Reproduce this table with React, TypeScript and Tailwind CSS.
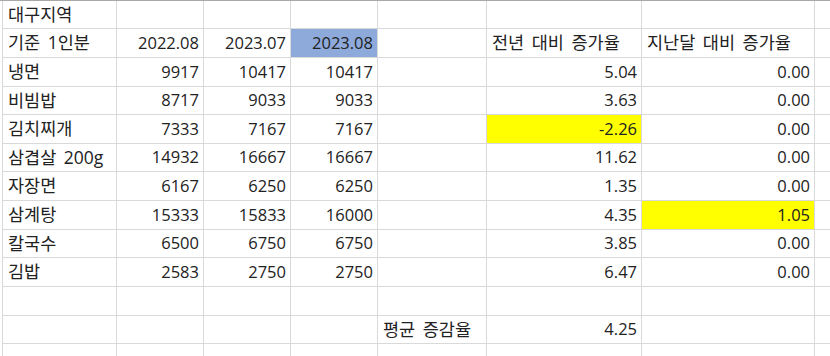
const ROWS: { name: string; a: string; b: string; c: string; yoy: string; mom: string; yoyHi?: boolean; momHi?: boolean }[] = [
  { name: '냉면', a: '9917', b: '10417', c: '10417', yoy: '5.04', mom: '0.00' },
  { name: '비빔밥', a: '8717', b: '9033', c: '9033', yoy: '3.63', mom: '0.00' },
  { name: '김치찌개', a: '7333', b: '7167', c: '7167', yoy: '-2.26', mom: '0.00', yoyHi: true },
  { name: '삼겹살 200g', a: '14932', b: '16667', c: '16667', yoy: '11.62', mom: '0.00' },
  { name: '자장면', a: '6167', b: '6250', c: '6250', yoy: '1.35', mom: '0.00' },
  { name: '삼계탕', a: '15333', b: '15833', c: '16000', yoy: '4.35', mom: '1.05', momHi: true },
  { name: '칼국수', a: '6500', b: '6750', c: '6750', yoy: '3.85', mom: '0.00' },
  { name: '김밥', a: '2583', b: '2750', c: '2750', yoy: '6.47', mom: '0.00' },
]

function Cell({ children, right, className }: { children?: React.ReactNode; right?: boolean; className?: string }) {
  return (
    <div
      className={`flex items-center whitespace-nowrap overflow-visible leading-none ${
        right ? 'justify-end pr-[4px] text-[16.5px]' : 'justify-start pl-[5px] text-[17.5px] [word-spacing:3px]'
      } ${className ?? 'bg-white'}`}
    >
      {children}
    </div>
  )
}

function EmptyRow({ cols = 8 }: { cols?: number }) {
  return (
    <>
      {Array.from({ length: cols }).map((_, i) => (
        <Cell key={i} />
      ))}
    </>
  )
}

export default function App() {
  return (
    <div
      className="w-[830px] h-[356px] overflow-hidden bg-white border-t border-[#a8a8a8] text-[#222]"
      style={{ fontFamily: "'Open Sans', 'Noto Sans CJK KR', sans-serif" }}
    >
      <div className="ml-[2px] pl-px grid gap-px bg-[#d9d9d9] grid-cols-[113px_86px_86px_86px_108px_154px_172px_15px] grid-rows-[27px_28px_28px_27px_28px_27px_28px_28px_27px_28px_28px_27px_12px]">
        {/* title */}
        <Cell>대구지역</Cell>
        <EmptyRow cols={7} />

        {/* header */}
        <Cell>기준 1인분</Cell>
        <Cell right>2022.08</Cell>
        <Cell right>2023.07</Cell>
        <Cell right className="bg-[#8eaadb]">2023.08</Cell>
        <Cell />
        <Cell>전년 대비 증가율</Cell>
        <Cell>지난달 대비 증가율</Cell>
        <Cell />

        {ROWS.map((r) => (
          <div key={r.name} className="contents">
            <Cell>{r.name}</Cell>
            <Cell right>{r.a}</Cell>
            <Cell right>{r.b}</Cell>
            <Cell right>{r.c}</Cell>
            <Cell />
            <Cell right className={r.yoyHi ? 'bg-[#ffff00]' : 'bg-white'}>{r.yoy}</Cell>
            <Cell right className={r.momHi ? 'bg-[#ffff00]' : 'bg-white'}>{r.mom}</Cell>
            <Cell />
          </div>
        ))}

        <EmptyRow />

        {/* average */}
        <Cell />
        <Cell />
        <Cell />
        <Cell />
        <Cell>평균 증감율</Cell>
        <Cell right>4.25</Cell>
        <Cell />
        <Cell />

        <EmptyRow />
      </div>
    </div>
  )
}
